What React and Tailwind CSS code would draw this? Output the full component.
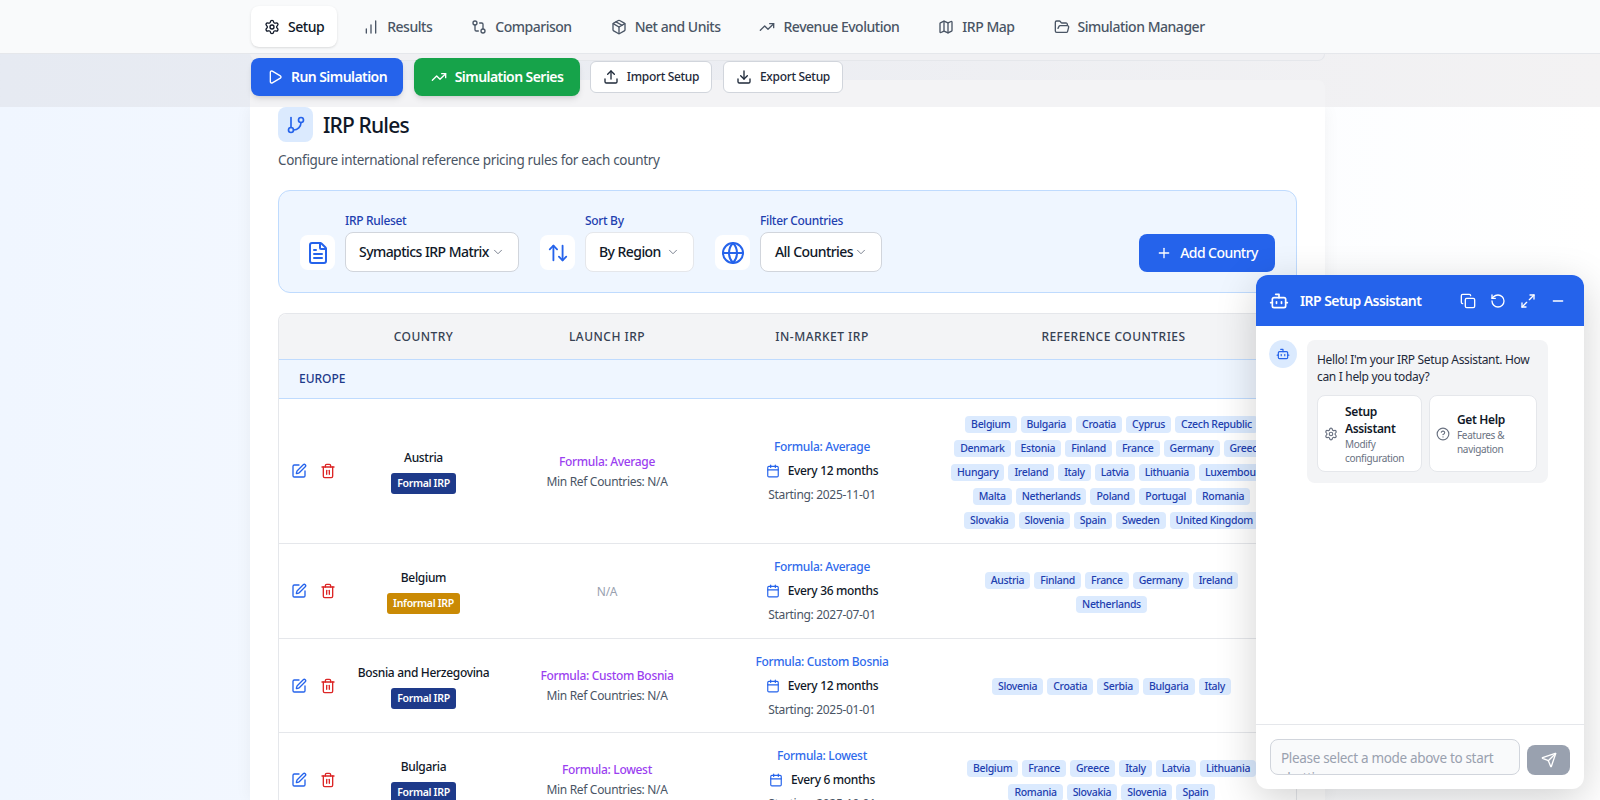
import {
  Settings, ChartNoAxesColumnIncreasing, GitCompare, Package, TrendingUp, Map, FolderOpen,
  Play, Upload, Download, GitBranch, FileText, ArrowUpDown, Globe, ChevronDown, Plus,
  SquarePen, Trash2, Calendar, Bot, Copy, RotateCcw, Maximize2, Minus, CircleHelp, Send,
} from 'lucide-react';

const tabs = [
  { label: 'Setup', icon: Settings, active: true },
  { label: 'Results', icon: ChartNoAxesColumnIncreasing },
  { label: 'Comparison', icon: GitCompare },
  { label: 'Net and Units', icon: Package },
  { label: 'Revenue Evolution', icon: TrendingUp },
  { label: 'IRP Map', icon: Map },
  { label: 'Simulation Manager', icon: FolderOpen },
];

const rows = [
  {
    country: 'Austria', formal: true, launch: 'Average', market: 'Average', every: 12, start: '2025-11-01', h: 'h-[145px]',
    refs: [
      ['Belgium', 'Bulgaria', 'Croatia', 'Cyprus', 'Czech Republic'],
      ['Denmark', 'Estonia', 'Finland', 'France', 'Germany', 'Greece'],
      ['Hungary', 'Ireland', 'Italy', 'Latvia', 'Lithuania', 'Luxembourg'],
      ['Malta', 'Netherlands', 'Poland', 'Portugal', 'Romania'],
      ['Slovakia', 'Slovenia', 'Spain', 'Sweden', 'United Kingdom'],
    ],
  },
  {
    country: 'Belgium', formal: false, launch: null, market: 'Average', every: 36, start: '2027-07-01', h: 'h-[95px]',
    refs: [['Austria', 'Finland', 'France', 'Germany', 'Ireland'], ['Netherlands']],
  },
  {
    country: 'Bosnia and Herzegovina', formal: true, launch: 'Custom Bosnia', market: 'Custom Bosnia', every: 12, start: '2025-01-01', h: 'h-[94px]',
    refs: [['Slovenia', 'Croatia', 'Serbia', 'Bulgaria', 'Italy']],
  },
  {
    country: 'Bulgaria', formal: true, launch: 'Lowest', market: 'Lowest', every: 6, start: '2025-10-01', h: 'h-[94px]',
    refs: [['Belgium', 'France', 'Greece', 'Italy', 'Latvia', 'Lithuania'], ['Romania', 'Slovakia', 'Slovenia', 'Spain']],
  },
];

function Tag({ name }) {
  return <span className="h-[17px] shrink-0 rounded-[4px] bg-[#dbeafe] px-[6px] text-[10.5px] font-medium leading-[17px] tracking-[-0.03em] text-[#1e40af]">{name}</span>;
}

function Row({ row }) {
  return (
    <div className={`grid grid-cols-[67px_155px_212px_218px_1fr] items-center border-b border-gray-200 ${row.h}`}>
      <div className="flex items-center gap-[13px] pl-3 text-[#2563eb]">
        <SquarePen size={16} />
        <Trash2 size={16} className="text-[#dc2626]" />
      </div>
      <div className="flex flex-col items-center gap-[7px] whitespace-nowrap pt-[2px]">
        <span className="text-xs font-medium text-gray-900">{row.country}</span>
        {row.formal ? (
          <span className="h-[21px] rounded-[3px] bg-[#1e3a8a] px-[6px] text-[10.5px] font-semibold leading-[21px] tracking-[-0.03em] text-white">Formal IRP</span>
        ) : (
          <span className="h-[21px] rounded-[3px] bg-[#ca8a04] px-[6px] text-[10.5px] font-semibold leading-[21px] tracking-[-0.03em] text-white">Informal IRP</span>
        )}
      </div>
      <div className="flex flex-col items-center gap-1 pt-[1px] text-xs">
        {row.launch ? (
          <>
            <span className="font-medium text-[#9b3ff0]">Formula: {row.launch}</span>
            <span className="text-gray-600">Min Ref Countries: N/A</span>
          </>
        ) : (
          <span className="text-gray-400">N/A</span>
        )}
      </div>
      <div className="flex flex-col items-center gap-2 text-xs">
        <span className="font-medium text-[#2f6bec]">Formula: {row.market}</span>
        <span className="flex items-center gap-2 font-medium text-gray-900">
          <Calendar size={14} className="text-[#2563eb]" />
          Every {row.every} months
        </span>
        <span className="text-gray-600">Starting: {row.start}</span>
      </div>
      <div className="flex flex-col items-center gap-[7px] whitespace-nowrap pr-1 pt-[2px]">
        {row.refs.map((line, i) => (
          <div key={i} className="flex justify-center gap-1">
            {line.map((name) => <Tag key={name} name={name} />)}
          </div>
        ))}
      </div>
    </div>
  );
}

function ChatPanel() {
  return (
    <div className="absolute left-[1256px] top-[275px] z-20 flex h-[514px] w-[328px] flex-col overflow-hidden rounded-xl bg-white shadow-[0_10px_40px_rgba(0,0,0,0.18)]">
      <div className="flex h-[51px] shrink-0 items-center bg-[#2563eb] pl-[13px] pr-[18px] text-white">
        <Bot size={20} />
        <span className="ml-[11px] text-sm font-semibold tracking-[-0.04em]">IRP Setup Assistant</span>
        <div className="ml-auto flex items-center gap-[14px]">
          <Copy size={16} />
          <RotateCcw size={16} />
          <Maximize2 size={16} />
          <Minus size={16} />
        </div>
      </div>
      <div className="flex flex-1 items-start gap-[10px] pl-[13px] pt-[14px]">
        <div className="flex h-7 w-7 shrink-0 items-center justify-center rounded-full bg-[#dbeafe] text-[#2563eb]">
          <Bot size={14} />
        </div>
        <div className="w-[241px] rounded-lg bg-gray-100 p-[10px] pb-[11px] pt-[11px]">
          <p className="text-xs leading-[17px] text-gray-800">Hello! I'm your IRP Setup Assistant. How can I help you today?</p>
          <div className="mt-[10px] flex gap-[7px]">
            <div className="flex h-[77px] w-[105px] shrink-0 items-center gap-[7px] rounded-lg border border-gray-200 bg-white pl-[6px]">
              <Settings size={14} className="shrink-0 text-gray-500" />
              <div>
                <p className="text-xs font-semibold leading-[17px] tracking-[-0.03em] text-gray-900">Setup Assistant</p>
                <p className="text-[10px] leading-[14px] text-gray-500">Modify configuration</p>
              </div>
            </div>
            <div className="flex h-[77px] w-[108px] shrink-0 items-center gap-[7px] rounded-lg border border-gray-200 bg-white pl-[6px]">
              <CircleHelp size={14} className="shrink-0 text-gray-500" />
              <div>
                <p className="text-xs font-semibold leading-[17px] tracking-[-0.03em] text-gray-900">Get Help</p>
                <p className="text-[10px] leading-[14px] text-gray-500">Features & navigation</p>
              </div>
            </div>
          </div>
        </div>
      </div>
      <div className="flex h-[65px] shrink-0 items-end gap-[7px] border-t border-gray-200 px-[14px] pb-[14px]">
        <textarea
          disabled
          className="h-9 w-[250px] resize-none overflow-hidden rounded-lg border border-gray-300 bg-gray-50 px-[10px] py-2 text-[13.5px] leading-[20px] placeholder:text-gray-400"
          placeholder="Please select a mode above to start chatting..."
        />
        <div className="flex h-[30px] w-[43px] items-center justify-center rounded-lg bg-gray-400 text-white">
          <Send size={16} />
        </div>
      </div>
    </div>
  );
}

export default function App() {
  return (
    <div className="relative h-[800px] overflow-hidden bg-gradient-to-r from-[#f0f6ff] to-white font-['Noto_Sans','Open_Sans',sans-serif] tracking-[-0.02em]">
      <nav className="flex h-[54px] items-center gap-[13px] border-b border-gray-200 bg-[#f9fafb] pl-[251px] tracking-[-0.03em]">
        {tabs.map(({ label, icon: Icon, active }) => (
          <div
            key={label}
            className={`flex h-[41px] items-center gap-2 rounded-lg px-[13px] text-sm font-medium ${active ? 'bg-white text-gray-900 shadow-sm' : 'text-gray-600'}`}
          >
            <Icon size={16} />
            {label}
          </div>
        ))}
      </nav>

      <div className="relative flex h-[53px] items-start bg-gradient-to-r from-[#e6eaf2] to-[#f3f2f3] pl-[251px] pt-1">
        <div className="absolute left-[250px] top-0 h-[7px] w-[1075px] rounded-b-lg border-b border-r border-gray-200 bg-[#f0f0f3]" />
        <div className="absolute bottom-0 left-[250px] top-[26px] w-[1075px] rounded-t-lg bg-[#f3f3f5]" />
        <button className="relative flex h-[38px] w-[152px] items-center justify-center gap-2 rounded-lg bg-[#2563eb] text-sm font-semibold tracking-[-0.04em] text-white shadow-md">
          <Play size={16} /> Run Simulation
        </button>
        <button className="relative ml-[11px] flex h-[38px] w-[166px] items-center justify-center gap-2 rounded-lg bg-[#16a34a] text-sm font-semibold tracking-[-0.04em] text-white shadow-md">
          <TrendingUp size={16} /> Simulation Series
        </button>
        <button className="relative ml-[10px] mt-[3px] flex h-8 w-[122px] items-center justify-center gap-2 rounded-md border border-gray-300 bg-white text-xs font-medium text-gray-800">
          <Upload size={16} /> Import Setup
        </button>
        <button className="relative ml-[11px] mt-[3px] flex h-8 w-[120px] items-center justify-center gap-2 rounded-md border border-gray-300 bg-white text-xs font-medium text-gray-800">
          <Download size={16} /> Export Setup
        </button>
      </div>

      <main className="ml-[250px] h-[693px] w-[1075px] overflow-hidden bg-white px-7 shadow-[0_0_16px_rgba(0,0,0,0.05)]">
        <div className="flex h-[35px] items-center gap-[10px]">
          <div className="flex h-[35px] w-[35px] items-center justify-center rounded-lg bg-[#dbeafe] text-[#2563eb]">
            <GitBranch size={20} />
          </div>
          <h1 className="h-[35px] text-[21px] font-medium leading-[37px] tracking-[-0.04em] text-gray-900">IRP Rules</h1>
        </div>
        <p className="mt-[8px] text-[13.5px] text-gray-600">Configure international reference pricing rules for each country</p>

        <div className="mt-[20px] flex h-[103px] items-center rounded-xl border border-[#bfdbfe] bg-[#eff6ff] pl-[21px] pr-[21px]">
          <div className="mt-[22px] flex h-[35px] w-[35px] items-center justify-center rounded-lg bg-white text-[#2563eb]">
            <FileText size={24} />
          </div>
          <div className="ml-[10px] mt-[2px]">
            <p className="mb-[3px] text-xs font-medium text-[#1e40af]">IRP Ruleset</p>
            <div className="flex h-[40px] w-[174px] items-center justify-between whitespace-nowrap rounded-lg border border-gray-300 bg-white pl-[13px] pr-[13px] text-sm font-medium tracking-[-0.04em] text-gray-900">
              Symaptics IRP Matrix <ChevronDown size={14} strokeWidth={1.5} className="shrink-0 text-gray-500" />
            </div>
          </div>
          <div className="ml-[21px] mt-[22px] flex h-[35px] w-[35px] items-center justify-center rounded-lg bg-white text-[#2563eb]">
            <ArrowUpDown size={22} />
          </div>
          <div className="ml-[10px] mt-[2px]">
            <p className="mb-[3px] text-xs font-medium text-[#1e40af]">Sort By</p>
            <div className="flex h-[40px] w-[109px] items-center justify-between whitespace-nowrap rounded-lg border border-gray-200 bg-white pl-[13px] pr-[13px] text-sm font-medium tracking-[-0.04em] text-gray-900">
              By Region <ChevronDown size={14} strokeWidth={1.5} className="shrink-0 text-gray-500" />
            </div>
          </div>
          <div className="ml-[21px] mt-[22px] flex h-[35px] w-[35px] items-center justify-center rounded-lg bg-white text-[#2563eb]">
            <Globe size={24} />
          </div>
          <div className="ml-[10px] mt-[2px]">
            <p className="mb-[3px] text-xs font-medium text-[#1e40af]">Filter Countries</p>
            <div className="flex h-[40px] w-[122px] items-center justify-between whitespace-nowrap rounded-lg border border-gray-300 bg-white pl-[14px] pr-[13px] text-sm font-medium tracking-[-0.04em] text-gray-900">
              All Countries <ChevronDown size={14} strokeWidth={1.5} className="shrink-0 text-gray-500" />
            </div>
          </div>
          <button className="ml-auto mt-[22px] flex h-[38px] w-[136px] items-center justify-center gap-2 rounded-lg bg-[#2563eb] text-sm font-medium tracking-[-0.04em] text-white">
            <Plus size={16} /> Add Country
          </button>
        </div>

        <div className="mt-[20px] rounded-t-lg border-x border-t border-gray-200">
          <div className="grid h-[46px] grid-cols-[67px_155px_212px_218px_1fr] items-center rounded-t-lg border-b border-[#bfdbfe] bg-gray-100 text-center text-xs font-medium tracking-[0.04em] text-gray-700">
            <span />
            <span>COUNTRY</span>
            <span>LAUNCH IRP</span>
            <span>IN-MARKET IRP</span>
            <span>REFERENCE COUNTRIES</span>
          </div>
          <div className="flex h-[39px] items-center border-b border-[#bfdbfe] bg-[#eff6ff] pl-[20px] text-xs font-medium tracking-normal text-[#1e3a8a]">EUROPE</div>
          {rows.map((row) => <Row key={row.country} row={row} />)}
        </div>
      </main>

      <ChatPanel />
    </div>
  );
}
